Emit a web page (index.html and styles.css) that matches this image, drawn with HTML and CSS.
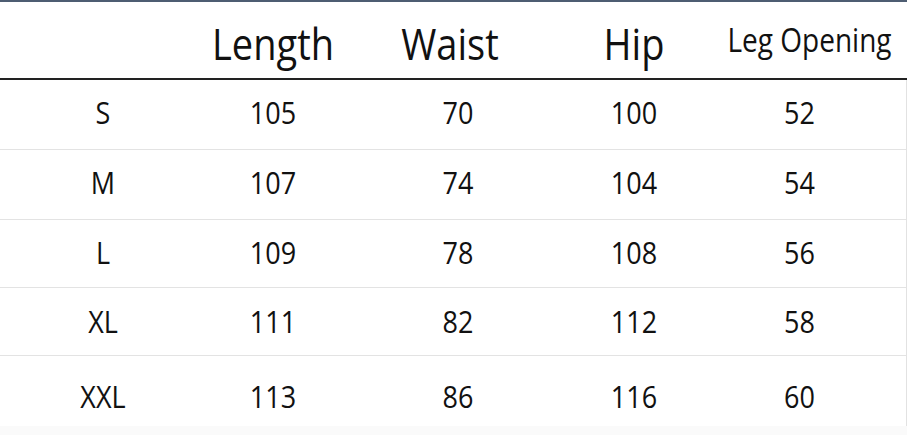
FILE: index.html
```html
<!DOCTYPE html>
<html>
<head>
<meta charset="utf-8">
<link rel="stylesheet" href="styles.css">
</head>
<body>
<div class="chart">
  <div class="row head">
    <div class="cell"></div>
    <div class="cell">Length</div>
    <div class="cell waist">Waist</div>
    <div class="cell">Hip</div>
    <div class="cell leg">Leg Opening</div>
  </div>
  <div class="body">
    <div class="row r1"><div class="cell">S</div><div class="cell">105</div><div class="cell">70</div><div class="cell">100</div><div class="cell">52</div></div>
    <div class="row r2"><div class="cell">M</div><div class="cell">107</div><div class="cell">74</div><div class="cell">104</div><div class="cell">54</div></div>
    <div class="row r3"><div class="cell">L</div><div class="cell">109</div><div class="cell">78</div><div class="cell">108</div><div class="cell">56</div></div>
    <div class="row r4"><div class="cell">XL</div><div class="cell">111</div><div class="cell">82</div><div class="cell">112</div><div class="cell">58</div></div>
    <div class="row r5"><div class="cell">XXL</div><div class="cell">113</div><div class="cell">86</div><div class="cell">116</div><div class="cell">60</div></div>
  </div>
</div>
</body>
</html>
```
FILE: styles.css
```css
html, body {
  margin: 0;
  padding: 0;
  background: #fafafa;
}
body {
  width: 907px;
  height: 435px;
  overflow: hidden;
  font-family: "Open Sans", "Noto Sans", sans-serif;
  color: #111;
}
.chart {
  background: #fff;
  border-top: 2px solid #4e5d72;
  width: 907px;
}
.row {
  display: grid;
  grid-template-columns: 206px 134px 236px 116px 215px;
  align-items: center;
}
.cell {
  text-align: center;
  white-space: nowrap;
}
.head {
  height: 76px;
  border-bottom: 2px solid #222;
  font-size: 38px;
  align-items: end;
}
.head .cell {
  line-height: 1;
  padding-bottom: 15px;
  transform: scaleY(1.15);
}
.head .waist {
  padding-right: 16px;
}
.head .leg {
  font-size: 28px;
  padding-left: 20px;
  padding-bottom: 23px;
}
.body {
  border-right: 1px solid #e2e2e2;
  width: 906px;
}
.body .row {
  font-size: 27px;
  font-weight: 500;
  border-bottom: 1px solid #e3e3e3;
  box-sizing: border-box;
}
.body .cell {
  transform: scaleY(1.15);
}
.r1 { height: 70px; padding-bottom: 6px; }
.r2 { height: 70px; padding-bottom: 6px; }
.r3 { height: 68px; padding-bottom: 4px; }
.r4 { height: 68px; padding-bottom: 2px; }
.r5 { height: 70px; padding-top: 8px; border-bottom: none !important; }
```
